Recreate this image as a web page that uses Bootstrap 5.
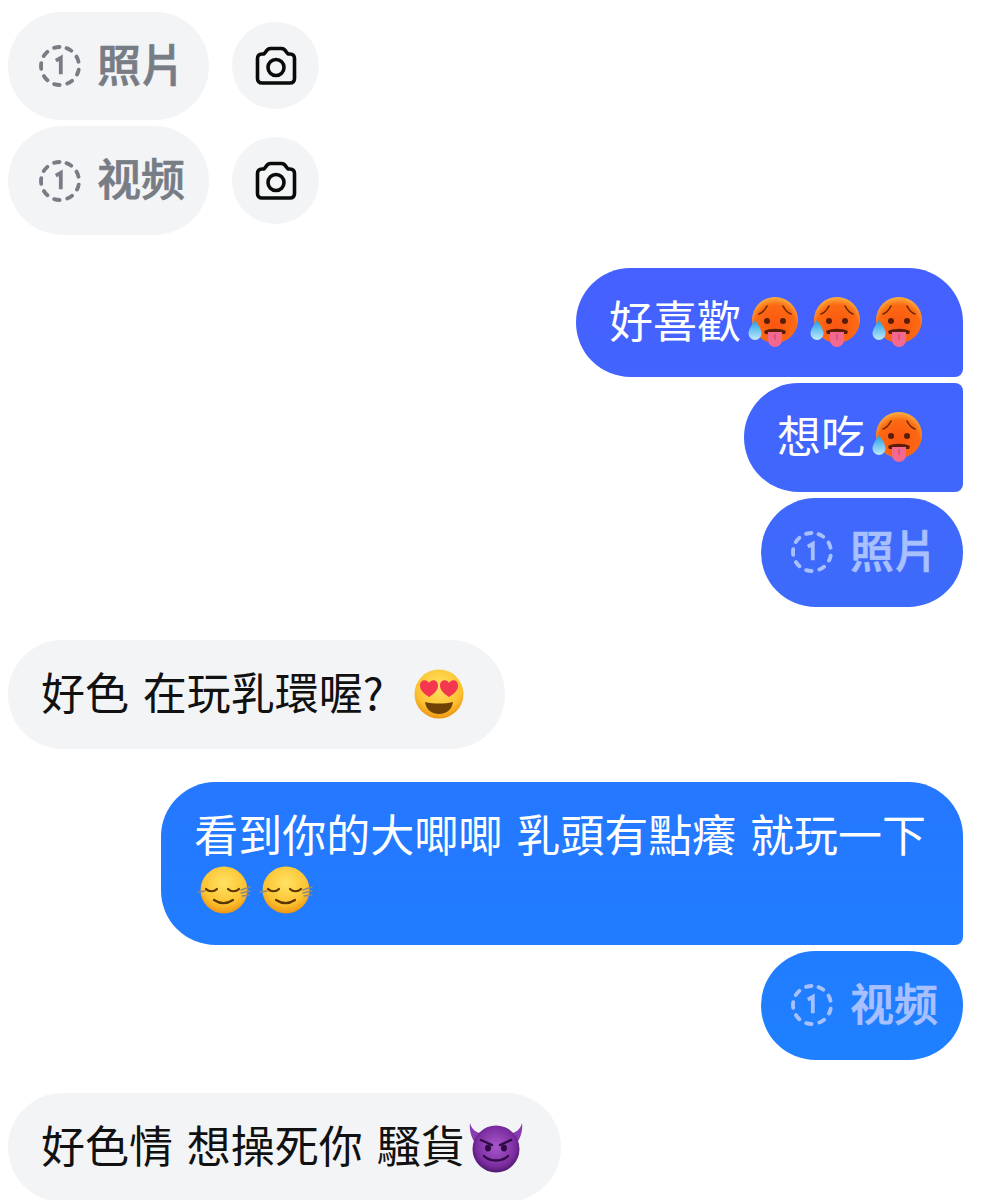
<!DOCTYPE html>
<html lang="zh-Hant">
<head>
  <meta charset="UTF-8">
  <title>聊天</title>
  <meta name="viewport" content="width=device-width, initial-scale=1">
  <link href="https://cdn.jsdelivr.net/npm/bootstrap@5.3.3/dist/css/bootstrap.min.css" rel="stylesheet">
  <style>
    body { background: #fff; overflow: hidden; font-family: "Noto Sans CJK TC", "Liberation Sans", sans-serif; }
    .chat-wrap { padding: 11.5px 22px 0 8px; height: 1200px; overflow: hidden; gap: 6.2px; }
    .bubble { font-size: 44px; line-height: 54.4px; padding: 24px 37px 30.4px 33px; border-radius: 54.4px; white-space: nowrap; word-spacing: 4px; }
    .in { background: #f3f4f6; color: #111; }
    .out { background: linear-gradient(180deg, #4560ff 268px, #3d6bfb 600px, #2478ff 800px, #1e80ff 1060px) fixed; color: #fff; }
    .tail-b { border-bottom-right-radius: 8px; }
    .tail-t { border-top-right-radius: 8px; }
    .group-gap { margin-top: 26.8px; }
    .media { font-weight: 500; -webkit-text-stroke: .7px currentColor; font-family: "Noto Sans CJK SC", "Liberation Sans", sans-serif; padding-left: 31px; padding-right: 24px; gap: 16px; }
    .in.media { color: #777c85; }
    .out.media { color: #a9c0ff; padding-left: 30px; padding-right: 25px; gap: 17px; }
    .ring { width: 42px; height: 42px; flex: none; position: relative; top: 3px; }
    .cam-btn { width: 87px; height: 87px; background: #f3f4f6; }
    .cam-btn svg { width: 42px; height: 40px; }
    .cam-row { gap: 23px; }
    .emo { width: 54px; height: 54px; vertical-align: middle; margin: -12px 0 -4px; }
    .emo-first { margin-left: 4px; }
    .emo-tight { margin-left: 3px; }
    .emo-gap { margin-left: 8px; }
    .emo-wide { margin-left: 14px; margin-right: 2px; }
    .emo-end { margin-right: 3px; }
    .emo-end-sm { margin-right: 1px; }
  </style>
</head>
<body>

<svg width="0" height="0" class="position-absolute">
  <defs>
    <radialGradient id="hot" cx="50%" cy="62%" r="62%">
      <stop offset="0" stop-color="#fb5512"/><stop offset=".72" stop-color="#fb6a12"/><stop offset="1" stop-color="#fdb040"/>
    </radialGradient>
    <radialGradient id="sun" cx="50%" cy="35%" r="65%">
      <stop offset="0" stop-color="#ffe263"/><stop offset=".7" stop-color="#fcc332"/><stop offset="1" stop-color="#ee9512"/>
    </radialGradient>
    <radialGradient id="imp" cx="50%" cy="45%" r="55%">
      <stop offset="0" stop-color="#a858cc"/><stop offset=".75" stop-color="#7c2ea1"/><stop offset="1" stop-color="#51186f"/>
    </radialGradient>
    <linearGradient id="drop" x1="0" y1="0" x2="0" y2="1">
      <stop offset="0" stop-color="#1f9ce6"/><stop offset="1" stop-color="#bfeafc"/>
    </linearGradient>
    <symbol id="e-hot" viewBox="0 0 54 54">
      <circle cx="30" cy="25" r="23" fill="url(#hot)"/>
      <path d="M14 19c3-1 6-4 8-8M46 19c-3-1-6-4-8-8" fill="none" stroke="#6f2604" stroke-width="1.600" stroke-linecap="round"/>
      <circle cx="22" cy="26" r="3" fill="#5b1d05"/><circle cx="38" cy="26" r="3" fill="#5b1d05"/>
      <path d="M19 36c6-3 16-3 22 0l-1 3H20z" fill="#5b1d05"/>
      <path d="M23 37h14v8a7 7 0 0 1-14 0z" fill="#f2688f"/>
      <path d="M30 39v6" stroke="#d2466f" stroke-width="1.200"/>
      <path d="M10 25c4 6 6.500 10 6.500 13.500a6.500 6.500 0 0 1-13 0C3.500 35 6 31 10 25z" fill="url(#drop)"/>
    </symbol>
    <symbol id="e-heart" viewBox="0 0 54 54">
      <circle cx="27" cy="27" r="24.500" fill="url(#sun)"/>
      <path d="M13 35c9 2 19 2 28 0-1 8-7 12-14 12s-13-4-14-12z" fill="#6e4205"/>
      <path d="M17 30C11 26 8 23 8 18.500c0-5.500 6.500-7 9-2.500 2.500-4.500 9-3 9 2.500 0 4.500-3 7.500-9 11.500z" fill="#f5364f"/>
      <path d="M37 30c-6-4-9-7-9-11.500 0-5.500 6.500-7 9-2.500 2.500-4.500 9-3 9 2.500 0 4.500-3 7.500-9 11.500z" fill="#f5364f"/>
    </symbol>
    <symbol id="e-sleepy" viewBox="0 0 54 54">
      <circle cx="27" cy="27" r="23.500" fill="url(#sun)"/>
      <path d="M9 26c3 3 8 3 11 0M31 26c3 3 8 3 11 0M17 37c6 4 13 4 19 0" fill="none" stroke="#5b3600" stroke-width="2.200" stroke-linecap="round"/>
      <path d="M1 29l7-1M44 27l9-3M44 30l9-2M45 33l7-1" stroke="#8d8a80" stroke-width="1.400" stroke-linecap="round"/>
    </symbol>
    <symbol id="e-imp" viewBox="0 0 54 54">
      <path d="M1 3c2 7 6 9 12 11l-7 9C2 17 0 10 1 3zM53 3c-2 7-6 9-12 11l7 9c4-6 6-13 5-20z" fill="#8a3bb0"/>
      <circle cx="27" cy="29" r="23.500" fill="url(#imp)"/>
      <path d="M12 20l11 5M42 20l-11 5" stroke="#2f0a45" stroke-width="2.400" stroke-linecap="round"/>
      <ellipse cx="19" cy="28" rx="3" ry="3.600" fill="#2f0a45"/><ellipse cx="35" cy="28" rx="3" ry="3.600" fill="#2f0a45"/>
      <path d="M15 36c6 6 18 6 24 0" fill="none" stroke="#2f0a45" stroke-width="2.400" stroke-linecap="round"/>
    </symbol>
    <symbol id="i-ring" viewBox="0 0 42 42">
      <circle cx="21" cy="21" r="19" fill="none" stroke="currentColor" stroke-width="3.800" stroke-dasharray="5.500 7.760" stroke-linecap="round" transform="rotate(-70 21 21)"/>
      <path d="M16.800 15.600 21.800 12.800v16.400" fill="none" stroke="currentColor" stroke-width="3.800"/>
    </symbol>
    <symbol id="i-cam" viewBox="0 0 42 40">
      <path d="M9 8l2.500-3.200C12.500 3.300 14 2.500 15.500 2.500h11c1.500 0 3 .8 4 2.300L33 8h2c3 0 4.500 2 4.500 4.500v20c0 2.500-1.500 4.500-4.500 4.500H7c-3 0-4.500-2-4.500-4.500v-20C2.500 10 4 8 7 8z" fill="none" stroke="#0a0a0a" stroke-width="3.600" stroke-linejoin="round"/>
      <circle cx="21" cy="21.500" r="8" fill="none" stroke="#0a0a0a" stroke-width="3.600"/>
    </symbol>
  </defs>
</svg>

<div class="chat-wrap d-flex flex-column">
  <div class="d-flex align-items-center cam-row">
    <div class="bubble in media rounded-pill d-flex align-items-center"><svg class="ring"><use href="#i-ring"/></svg><span>照片</span></div>
    <div class="cam-btn rounded-circle d-flex align-items-center justify-content-center"><svg><use href="#i-cam"/></svg></div>
  </div>
  <div class="d-flex align-items-center cam-row">
    <div class="bubble in media rounded-pill d-flex align-items-center"><svg class="ring"><use href="#i-ring"/></svg><span>视频</span></div>
    <div class="cam-btn rounded-circle d-flex align-items-center justify-content-center"><svg><use href="#i-cam"/></svg></div>
  </div>

  <div class="d-flex justify-content-end group-gap">
    <div class="bubble out tail-b">好喜歡<svg class="emo emo-first"><use href="#e-hot"/></svg><svg class="emo emo-gap"><use href="#e-hot"/></svg><svg class="emo emo-gap emo-end"><use href="#e-hot"/></svg></div>
  </div>
  <div class="d-flex justify-content-end">
    <div class="bubble out tail-t tail-b">想吃<svg class="emo emo-first emo-end"><use href="#e-hot"/></svg></div>
  </div>
  <div class="d-flex justify-content-end">
    <div class="bubble out media d-flex align-items-center"><svg class="ring"><use href="#i-ring"/></svg><span>照片</span></div>
  </div>

  <div class="d-flex group-gap">
    <div class="bubble in">好色 在玩乳環喔? <svg class="emo emo-wide"><use href="#e-heart"/></svg></div>
  </div>

  <div class="d-flex justify-content-end group-gap">
    <div class="bubble out tail-b">看到你的大唧唧 乳頭有點癢 就玩一下<br><svg class="emo emo-tight"><use href="#e-sleepy"/></svg><svg class="emo emo-gap"><use href="#e-sleepy"/></svg></div>
  </div>
  <div class="d-flex justify-content-end">
    <div class="bubble out media d-flex align-items-center"><svg class="ring"><use href="#i-ring"/></svg><span>视频</span></div>
  </div>

  <div class="d-flex group-gap">
    <div class="bubble in">好色情 想操死你 騷貨<svg class="emo emo-first emo-end-sm"><use href="#e-imp"/></svg></div>
  </div>
</div>

</body>
</html>
